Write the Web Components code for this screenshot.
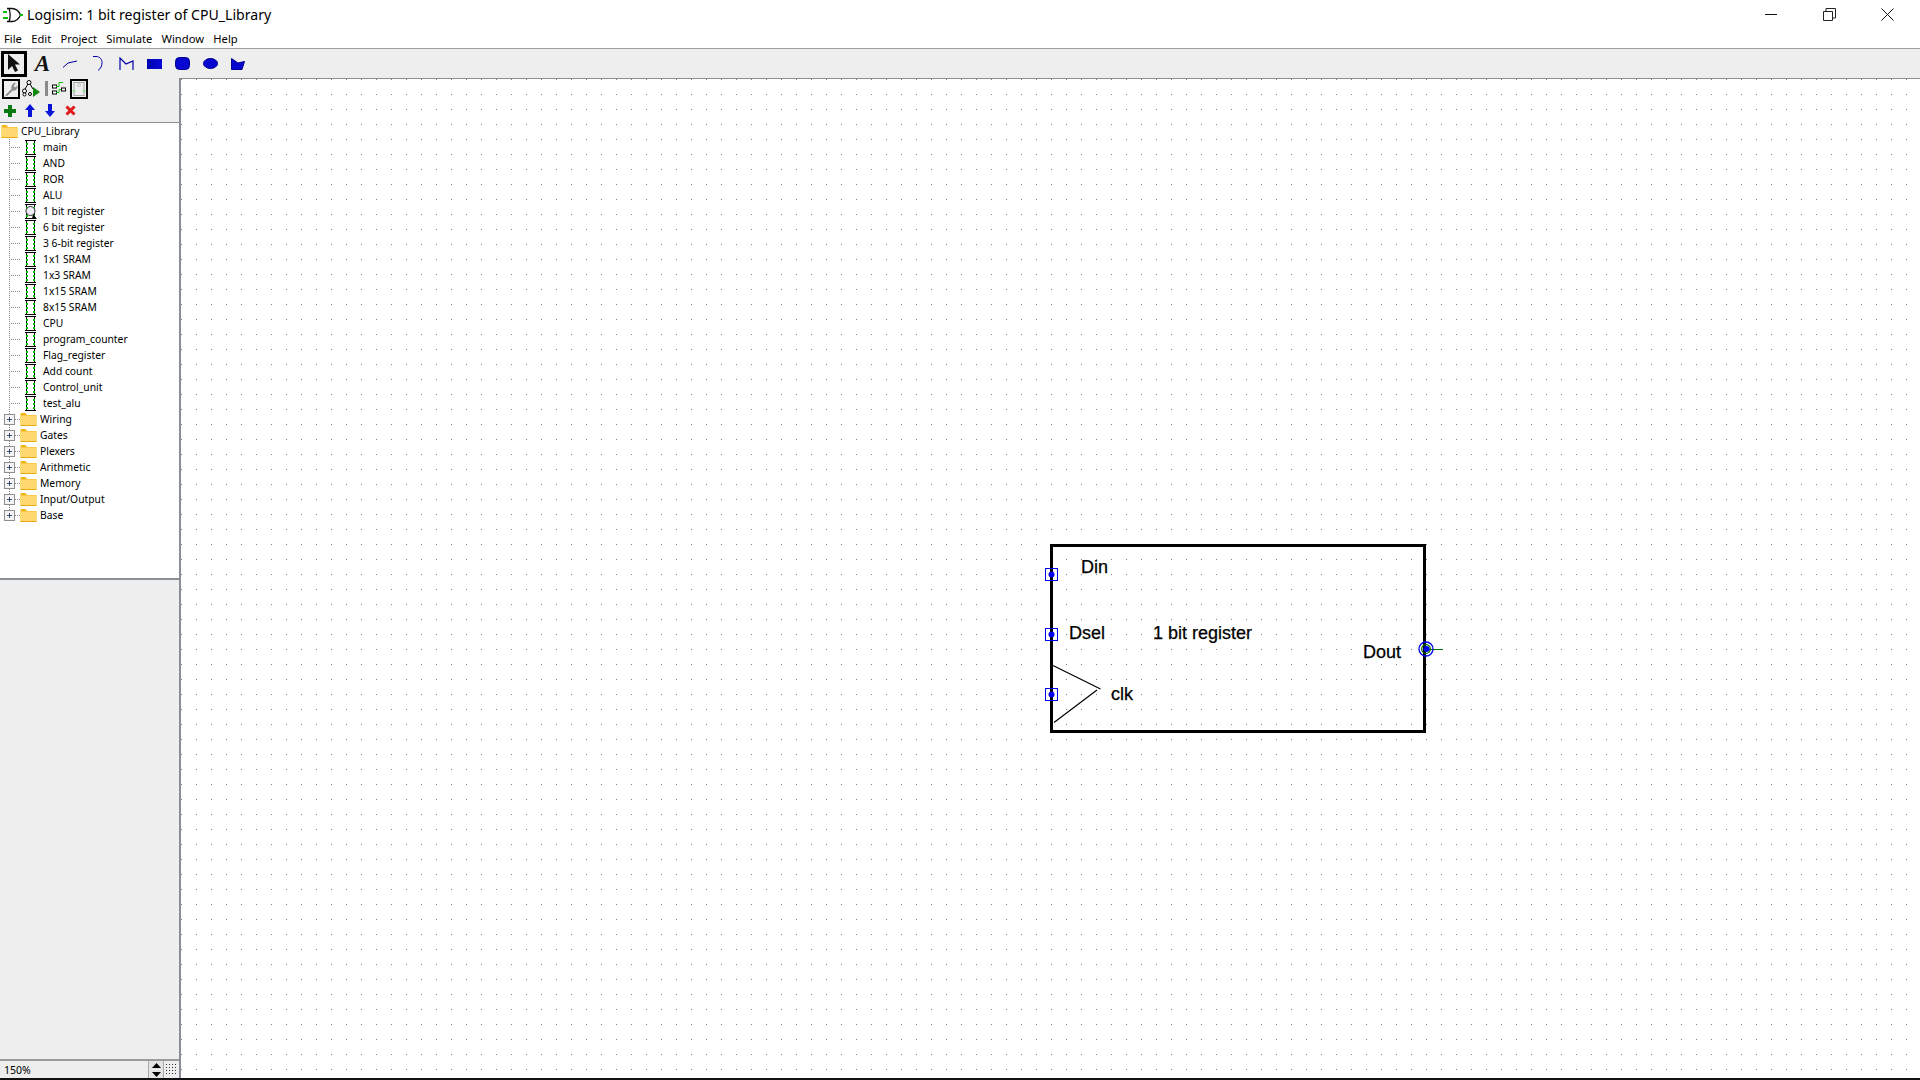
<!DOCTYPE html>
<html>
<head>
<meta charset="utf-8">
<title>Logisim</title>
<style>
  html, body { margin: 0; padding: 0; background: #fff; overflow: hidden; }
</style>
</head>
<body>
<logisim-app></logisim-app>

<script>
const UI_FONT = `"Noto Sans", "Liberation Sans", sans-serif`;

class TitleBar extends HTMLElement {
  constructor() {
    super();
    this.attachShadow({ mode: 'open' });
    this.shadowRoot.innerHTML = `
      <style>
        :host { display: flex; align-items: center; height: 30px; background: #fff; font: 14.100px ${UI_FONT}; color: #000; }
        .ico { margin-left: 3px; width: 20px; height: 18px; flex: none; }
        .name { margin-left: 4px; flex: 1; white-space: nowrap; padding-bottom: 2px; }
        .btns { display: flex; padding-right: 3px; }
        .btn { width: 58.500px; height: 30px; display: flex; align-items: center; justify-content: center; padding-bottom: 2px; box-sizing: border-box; }
        svg { display: block; }
      </style>
      <svg class="ico" viewBox="0 0 20 18">
        <path d="M4 2.500h5c4 0 7 3 8.500 6.500C16 12.500 13 15.500 9 15.500H4M6 2.500C7.500 6 7.500 12 6 15.500" fill="none" stroke="#111" stroke-width="1.300"/>
        <path d="M0 6h4M0 12h5M17 9h3" stroke="#00c000" stroke-width="2"/>
      </svg>
      <div class="name"><slot></slot></div>
      <div class="btns">
        <div class="btn"><svg width="12" height="12"><path d="M0 6.500h12" stroke="#111"/></svg></div>
        <div class="btn"><svg width="13" height="13"><path d="M.5 3.500h9v9h-9zM3 3V.5h9.500V10H10" fill="none" stroke="#222"/></svg></div>
        <div class="btn"><svg width="13" height="13"><path d="M.5.5l12 12M12.500.5l-12 12" stroke="#111" fill="none"/></svg></div>
      </div>`;
  }
}

class MenuBar extends HTMLElement {
  constructor() {
    super();
    this.attachShadow({ mode: 'open' });
    this.shadowRoot.innerHTML = `
      <style>
        :host { display: flex; align-items: center; padding: 0 0 1px 4px; gap: 9.300px; background: #fff; font: 11.200px ${UI_FONT}; color: #000; box-sizing: border-box; border-bottom: 1px solid #a0a0a0; height: 19px; }
        ::slotted(span) { white-space: nowrap; }
      </style>
      <slot></slot>`;
  }
}

class ToolBtn extends HTMLElement {
  constructor() {
    super();
    this.attachShadow({ mode: 'open' });
    this.shadowRoot.innerHTML = `
      <style>
        :host { display: flex; align-items: center; justify-content: center; flex: none; box-sizing: border-box; }
        :host([selected]) { border: 3px solid #000; }
        svg { display: block; }
      </style>
      <slot></slot>`;
  }
  connectedCallback() {
    this.style.width = (this.getAttribute('w') || 28) + 'px';
    this.style.height = (this.getAttribute('h') || 25) + 'px';
  }
}

class ToolRow extends HTMLElement {
  constructor() {
    super();
    this.attachShadow({ mode: 'open' });
    this.shadowRoot.innerHTML = `
      <style>
        :host { display: flex; align-items: center; background: #eee; }
      </style>
      <slot></slot>`;
  }
}

class TreeRow extends HTMLElement {
  constructor() {
    super();
    this.attachShadow({ mode: 'open' });
  }
  connectedCallback() {
    const kind = this.getAttribute('kind') || 'circuit';
    const folder = `<svg class="folder" width="17" height="13" viewBox="0 0 17 13">
        <path d="M.5 2V.8C.5.400 1 0 1.500 0h4l1.500 2h9.500v10.500H.5z" fill="#f3b519"/>
        <rect x=".5" y="2.500" width="16" height="10" fill="#ffd96f"/>
        <path d="M.5 12.500h16" stroke="#eaa90f"/>
      </svg>`;
    const chip = `<svg class="chip" width="12" height="15" viewBox="0 0 12 15">
        <path d="M0 .5h11M0 14.500h11M1.500 0v15M9.500 0v15" stroke="#000" fill="none"/>
        <path d="M1 3h2v2H1zM1 7h2v2H1zM1 11h2v2H1zM8 3h2v2H8zM8 7h2v2H8zM8 11h2v2H8z" fill="#00c000"/>
        ${kind === 'active' ? '<circle cx="5.500" cy="7" r="4.500" fill="#eeeef8" stroke="#333"/><path d="M8 10l4 5H7z" fill="#000"/>' : ''}
      </svg>`;
    const plus = `<svg class="plus" width="11" height="11" viewBox="0 0 11 11">
        <rect x=".5" y=".5" width="10" height="10" fill="#f4f4f4" stroke="#8f8f8f"/>
        <path d="M3 5.500h5M5.500 3v5" stroke="#3a4a7a"/>
      </svg>`;
    let icons = '';
    if (kind === 'root') icons = folder;
    else if (kind === 'lib') icons = plus + folder;
    else icons = chip;
    this.shadowRoot.innerHTML = `
      <style>
        :host { display: flex; align-items: center; height: 16px; font: 10.300px ${UI_FONT}; color: #000; white-space: nowrap; --dots: repeating-linear-gradient(to bottom, #8a8a8a 0 1px, transparent 1px 2px); --hdots: repeating-linear-gradient(to right, #8a8a8a 0 1px, transparent 1px 2px); }
        :host(:not([kind="root"])) { background-image: var(--dots), var(--hdots); background-repeat: no-repeat; background-size: 1px 16px, 12px 1px; background-position: 9px 0, 9px 8px; }
        :host([last]) { background-size: 1px 9px, 12px 1px; }
        :host([kind="root"]) { padding-left: 1px; }
        :host([kind="root"]) .label { margin-left: 3px; }
        :host([kind="lib"]) { padding-left: 4px; }
        :host([kind="lib"]) .folder { margin-left: 5px; }
        :host([kind="lib"]) .label { margin-left: 3px; }
        .chip { margin-left: 25px; }
        .chip + .label { margin-left: 6px; }
        svg { display: block; flex: none; }
      </style>
      ${icons}<span class="label"><slot></slot></span>`;
  }
}

class ProjectExplorer extends HTMLElement {
  constructor() {
    super();
    this.attachShadow({ mode: 'open' });
    this.shadowRoot.innerHTML = `
      <style>
        :host { display: block; height: 458px; box-sizing: border-box; background: #fff; border-top: 1px solid #8a8f96; border-bottom: 2px solid #8a8f96; }
      </style>
      <slot></slot>`;
  }
}

class ZoomControl extends HTMLElement {
  constructor() {
    super();
    this.attachShadow({ mode: 'open' });
    this.shadowRoot.innerHTML = `
      <style>
        :host { display: flex; height: 19px; box-sizing: border-box; align-items: stretch; background: #eee; border-top: 2px solid #9a9a9a; font: 10.500px ${UI_FONT}; color: #000; }
        .val { width: 148px; padding-left: 4px; box-sizing: border-box; display: flex; align-items: center; }
        .spin { width: 16px; display: flex; flex-direction: column; gap: 1px; border-left: 1px solid #a8a8a8; border-right: 1px solid #a8a8a8; box-sizing: border-box; }
        .spin div { flex: 1; background: #e4e4e4; display: flex; align-items: center; justify-content: center; }
        .grid { flex: 1; display: flex; align-items: center; justify-content: center; }
        svg { display: block; }
      </style>
      <div class="val"><slot></slot></div>
      <div class="spin">
        <div><svg width="9" height="5"><path d="M4.500 0L9 5H0z" fill="#000"/></svg></div>
        <div><svg width="9" height="5"><path d="M0 0h9L4.500 5z" fill="#000"/></svg></div>
      </div>
      <div class="grid">
        <svg width="12" height="12" viewBox="0 0 12 12">
          <path d="M0 .5h12M0 3.500h12M0 6.500h12M0 9.500h12" stroke="#333" stroke-dasharray="1 2"/>
        </svg>
      </div>`;
  }
}

class LeftPanel extends HTMLElement {
  constructor() {
    super();
    this.attachShadow({ mode: 'open' });
    this.shadowRoot.innerHTML = `
      <style>
        :host { display: flex; flex-direction: column; width: 181px; flex: none; box-sizing: border-box; background: #eee; border-right: 2px solid #8a8f96; }
        .fill { flex: 1; }
      </style>
      <slot name="top"></slot>
      <div class="fill"></div>
      <slot name="bottom"></slot>`;
  }
}

class CircuitCanvas extends HTMLElement {
  constructor() {
    super();
    this.attachShadow({ mode: 'open' });
    this.shadowRoot.innerHTML = `
      <style>
        :host { display: block; flex: 1; background: #fff; position: relative; overflow: hidden; border-top: 1px solid #8a8f96; }
        svg { position: absolute; left: 0; top: 0; width: 1739px; height: 999px; display: block; }
        text { font: 18px "Liberation Sans", Arial, sans-serif; fill: #000; stroke: #000; stroke-width: .25px; }
      </style>
      <svg viewBox="181 79 1739 999">
        <defs>
          <pattern id="grid" x="181" y="79" width="15" height="15" patternUnits="userSpaceOnUse">
            <rect width="1" height="1" fill="#808080"/>
          </pattern>
        </defs>
        <rect x="181" y="79" width="1739" height="999" fill="url(#grid)"/>

        <rect x="1051.500" y="545.500" width="373" height="186" fill="none" stroke="#000" stroke-width="3"/>
        <path d="M1053 665.500L1100.500 689M1097 690L1054 722.500" fill="none" stroke="#000" stroke-width="1.200"/>

        <text x="1081" y="573">Din</text>
        <text x="1069" y="639">Dsel</text>
        <text x="1153" y="639">1 bit register</text>
        <text x="1111" y="700">clk</text>
        <text x="1363" y="658">Dout</text>

        <g fill="#0000f0">
          <rect x="1045.500" y="568.500" width="12" height="12" fill="none" stroke="#0000f0"/>
          <circle cx="1051.500" cy="574.500" r="3"/>
          <rect x="1045.500" y="628.500" width="12" height="12" fill="none" stroke="#0000f0"/>
          <circle cx="1051.500" cy="634.500" r="3"/>
          <rect x="1045.500" y="688.500" width="12" height="12" fill="none" stroke="#0000f0"/>
          <circle cx="1051.500" cy="694.500" r="3"/>
        </g>
        <path d="M1426 649.500h17" stroke="#007000"/>
        <circle cx="1426" cy="649" r="7" fill="none" stroke="#0000f0" stroke-width="1.300"/>
        <circle cx="1426" cy="649" r="4.300" fill="none" stroke="#007000" stroke-width="1.300"/>
        <circle cx="1426.500" cy="649" r="3" fill="#0000f0"/>
      </svg>`;
  }
}

class LogisimApp extends HTMLElement {
  constructor() {
    super();
    this.attachShadow({ mode: 'open' });
    const circuits = ['main', 'AND', 'ROR', 'ALU', '1 bit register', '6 bit register', '3 6-bit register', '1x1 SRAM', '1x3 SRAM', '1x15 SRAM', '8x15 SRAM', 'CPU', 'program_counter', 'Flag_register', 'Add count', 'Control_unit', 'test_alu'];
    const libs = ['Wiring', 'Gates', 'Plexers', 'Arithmetic', 'Memory', 'Input/Output', 'Base'];
    const rows = circuits.map(c => `<tree-row kind="${c === '1 bit register' ? 'active' : 'circuit'}">${c}</tree-row>`).join('')
      + libs.map((l, i) => `<tree-row kind="lib" ${i === libs.length - 1 ? 'last' : ''}>${l}</tree-row>`).join('');

    this.shadowRoot.innerHTML = `
      <style>
        :host { display: flex; flex-direction: column; width: 1920px; height: 1080px; background: #fff; box-sizing: border-box; border-bottom: 2px solid #111; font-family: ${UI_FONT}; overflow: hidden; }
        .main { flex: 1; display: flex; min-height: 0; flex-direction: row; }
        .right { flex: 1; display: flex; flex-direction: column; min-width: 0; }
        tool-row.r0 { height: 29px; padding-left: 1px; flex: none; }
        tool-row.r1 { height: 21px; padding-left: 2px; }
        tool-row.r2 { height: 23px; }
        svg { display: block; }
        .a { font: italic bold 23px "Liberation Serif", serif; color: #111; line-height: 20px; padding-left: 2px; }
        .sep { width: 3px; height: 15px; background: #8a8a8a; flex: none; margin: 0 4px 0 1px; }
        .thin { border-width: 2px !important; }
      </style>
      <title-bar>Logisim: 1 bit register of CPU_Library</title-bar>
      <menu-bar><span>File</span><span>Edit</span><span>Project</span><span>Simulate</span><span>Window</span><span>Help</span></menu-bar>
      <tool-row class="r0">
        <tool-btn selected w="26" h="26"><svg width="14" height="19" viewBox="0 0 14 19"><path d="M1 0v16l4-4 3 6 3-1.500-3-6h5z" fill="#111"/></svg></tool-btn>
        <tool-btn w="29"><span class="a">A</span></tool-btn>
        <tool-btn><svg width="14" height="8"><path d="M0 7.500L5 3l9-2" fill="none" stroke="#0000a8"/></svg></tool-btn>
        <tool-btn><svg width="10" height="15"><path d="M0 .5h3c4 0 6 3 6 6 0 3-1 6-4 8" fill="none" stroke="#0000a8"/></svg></tool-btn>
        <tool-btn><svg width="15" height="13"><path d="M1 13V1l6 6 7-3v9" fill="none" stroke="#0000a8" stroke-width="1.200"/></svg></tool-btn>
        <tool-btn><svg width="15" height="10"><defs><linearGradient id="g1"><stop offset="0" stop-color="#0000b0"/><stop offset="1" stop-color="#0a0ad8"/></linearGradient></defs><rect width="15" height="10" fill="url(#g1)"/></svg></tool-btn>
        <tool-btn><svg width="15" height="13"><rect x=".5" y=".5" width="14" height="12" rx="4" fill="#0606d0" stroke="#000090"/></svg></tool-btn>
        <tool-btn><svg width="15" height="11"><ellipse cx="7.500" cy="5.500" rx="7" ry="5" fill="#0606d0" stroke="#000090"/></svg></tool-btn>
        <tool-btn><svg width="14" height="12"><path d="M.5.5L7 5l6.500-1.500L11 11.500H.5z" fill="#0606d0" stroke="#000090"/></svg></tool-btn>
      </tool-row>
      <div class="main">
        <left-panel>
          <div slot="top">
            <tool-row class="r1">
              <tool-btn selected class="thin" w="18" h="20"><svg width="14" height="14" viewBox="0 0 13 13"><path d="M1 12.500l6-6c-.5-2 0-4.500 3-6l1 .5-2 2.500 1 1.500 2.500-1.500c.5 3-2 5-4.500 4.500l-5 5z" fill="#8d8d8d"/></svg></tool-btn>
              <tool-btn w="24" h="20"><svg width="20" height="17" viewBox="0 0 20 17"><circle cx="7" cy="2.500" r="2" fill="#fff" stroke="#000"/><circle cx="2.500" cy="11" r="2" fill="#fff" stroke="#000"/><circle cx="2.500" cy="14.500" r="1.500" fill="#fff" stroke="#000"/><circle cx="8" cy="14" r="1.500" fill="#fff" stroke="#000"/><path d="M6 4L3 9M8 4l3 5" stroke="#000" fill="none"/><path d="M11 7l7 5-7 5z" fill="#128812"/></svg></tool-btn>
              <div class="sep"></div>
              <tool-btn w="15" h="20"><svg width="15" height="16" viewBox="0 0 15 15"><rect x="0.500" y="3.500" width="4" height="3" fill="#fff" stroke="#000"/><rect x="0.500" y="9.500" width="4" height="3" fill="#fff" stroke="#000"/><rect x="9.500" y="6.500" width="4" height="3" fill="#fff" stroke="#000"/><path d="M4 5h3V1h4M4 11h3V8h2" fill="none" stroke="#10c010"/></svg></tool-btn>
              <span style="width:3px;flex:none"></span>
              <tool-btn selected class="thin" w="18" h="20"><svg width="14" height="14" viewBox="0 0 13 14"><rect x="1.500" y=".5" width="10" height="13" fill="none" stroke="#a8a8a8"/><path d="M0 9h3M10 9h3" stroke="#60e060"/><circle cx="6.500" cy="3" r="1.500" fill="none" stroke="#c8c8c8"/></svg></tool-btn>
            </tool-row>
            <tool-row class="r2">
              <tool-btn w="20" h="23"><svg width="12" height="12"><path d="M4 0h4v4h4v4H8v4H4V8H0V4h4z" fill="#0b7a12"/></svg></tool-btn>
              <tool-btn w="20" h="23"><svg width="10" height="13"><path d="M5 0l5 6H7v7H3V6H0z" fill="#0a14d8"/></svg></tool-btn>
              <tool-btn w="20" h="23"><svg width="10" height="13"><path d="M5 13L0 7h3V0h4v7h3z" fill="#0a14d8"/></svg></tool-btn>
              <tool-btn w="20" h="23"><svg width="11" height="11"><path d="M1.500 1.500l8 8M9.500 1.500l-8 8" stroke="#e01818" stroke-width="3"/></svg></tool-btn>
            </tool-row>
            <project-explorer><tree-row kind="root">CPU_Library</tree-row>${rows}</project-explorer>
          </div>
          <zoom-control slot="bottom">150%</zoom-control>
        </left-panel>
        <div class="right">
          <circuit-canvas></circuit-canvas>
        </div>
      </div>`;
  }
}

customElements.define('title-bar', TitleBar);
customElements.define('menu-bar', MenuBar);
customElements.define('tool-btn', ToolBtn);
customElements.define('tool-row', ToolRow);
customElements.define('tree-row', TreeRow);
customElements.define('project-explorer', ProjectExplorer);
customElements.define('zoom-control', ZoomControl);
customElements.define('left-panel', LeftPanel);
customElements.define('circuit-canvas', CircuitCanvas);
customElements.define('logisim-app', LogisimApp);
</script>
</body>
</html>
